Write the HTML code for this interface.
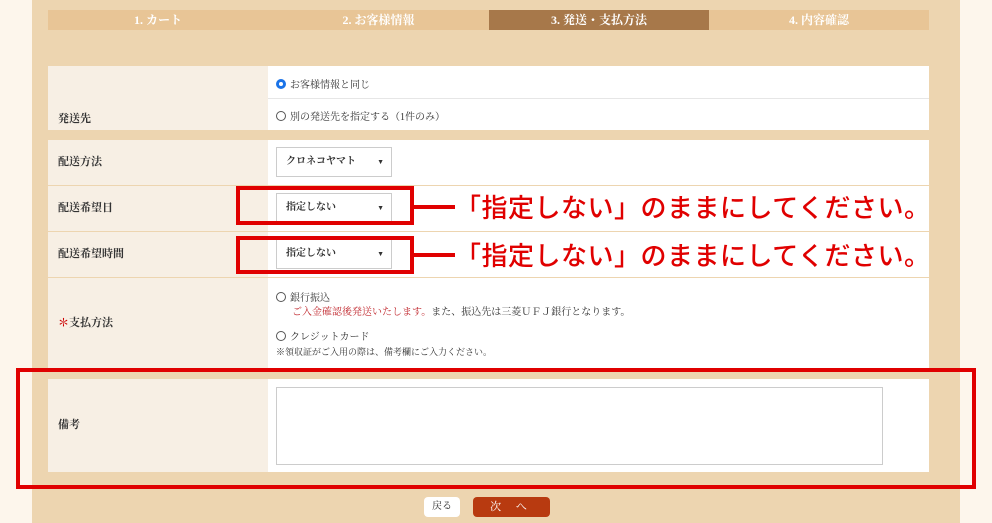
<!DOCTYPE html>
<html><head><meta charset="utf-8"><style>
*{margin:0;padding:0;box-sizing:border-box}
body{width:992px;height:523px;background:#fdf6ec;position:relative;overflow:hidden;font-family:"Liberation Serif","Noto Serif CJK SC",serif;font-size:11px;color:#333}
.main{position:absolute;left:32px;top:0;width:928px;height:523px;background:#edd5b0}
.abs{position:absolute}
.step{position:absolute;top:10px;height:20px;width:220px;background:#e8c596;color:#fff;font-weight:bold;font-size:12px;text-align:center;line-height:20px}
.lab{position:absolute;left:48px;width:220px;background:#f7efe4;font-weight:bold;font-size:11px;padding-left:10px}
.val{position:absolute;left:268px;width:661px;background:#fff}
.sel{position:absolute;left:276px;width:116px;height:30px;border:1px solid #ccc;background:#fff;font-size:10px;font-weight:bold;line-height:28px;padding-left:9px}
.sel:after{content:"▼";position:absolute;right:7px;font-size:7px}
.redbox{position:absolute;border:4px solid #e00000}
.call{position:absolute;left:455px;color:#e00000;font-family:"Liberation Sans","Noto Sans CJK JP",sans-serif;font-size:26px;letter-spacing:0.5px;line-height:32px;white-space:nowrap;font-weight:500}
.line{position:absolute;left:414px;width:41px;height:4px;background:#e00000}
.rad{display:inline-block;width:10px;height:10px;border:1px solid #555;border-radius:50%;vertical-align:-1px;margin-right:4px}
</style></head><body>
<div class="main"></div>
<div class="step" style="left:48px">1. カート</div>
<div class="step" style="left:268px;width:221px">2. お客様情報</div>
<div class="step" style="left:489px;background:#a7784a">3. 発送・支払方法</div>
<div class="step" style="left:709px">4. 内容確認</div>

<div class="lab" style="top:66px;height:64px;padding-top:44px">発送先</div>
<div class="val" style="top:66px;height:64px"></div>
<div class="abs" style="left:268px;top:98px;width:661px;height:1px;background:#e6e6e6"></div>
<div class="abs" style="left:276px;top:76px;font-size:10px"><span class="rad" style="border:3px solid #1a73e8;background:#fff"></span>お客様情報と同じ</div>
<div class="abs" style="left:276px;top:108px;font-size:10px"><span class="rad"></span>別の発送先を指定する（1件のみ）</div>

<div class="lab" style="top:140px;height:45px;line-height:45px">配送方法</div>
<div class="val" style="top:140px;height:45px"></div>
<div class="sel" style="top:147px">クロネコヤマト</div>
<div class="lab" style="top:186px;height:45px;line-height:45px">配送希望日</div>
<div class="val" style="top:186px;height:45px"></div>
<div class="sel" style="top:193px">指定しない</div>
<div class="lab" style="top:232px;height:45px;line-height:45px">配送希望時間</div>
<div class="val" style="top:232px;height:45px"></div>
<div class="sel" style="top:239px">指定しない</div>
<div class="lab" style="top:278px;height:90px;line-height:90px"><span style="color:#c00">＊</span>支払方法</div>
<div class="val" style="top:278px;height:90px"></div>
<div class="abs" style="left:276px;top:292px;font-size:10px;line-height:14px"><span class="rad"></span>銀行振込<br><span style="margin-left:16px;color:#c0272d">ご入金確認後発送いたします。</span>また、振込先は三菱ＵＦＪ銀行となります。</div>
<div class="abs" style="left:276px;top:331px;font-size:10px;line-height:14px"><span class="rad"></span>クレジットカード<br><span style="font-size:9px">※領収証がご入用の際は、備考欄にご入力ください。</span></div>

<div class="lab" style="top:379px;height:93px;line-height:93px">備考</div>
<div class="val" style="top:379px;height:93px"></div>
<div class="abs" style="left:276px;top:387px;width:607px;height:78px;border:1px solid #ccc;background:#fff"></div>

<div class="abs" style="left:424px;top:497px;width:36px;height:20px;background:#fff;border-radius:4px;font-size:10px;text-align:center;line-height:20px">戻る</div>
<div class="abs" style="left:473px;top:497px;width:77px;height:20px;background:#b83a10;border-radius:4px;color:#fff;font-size:11px;text-align:center;line-height:20px;letter-spacing:6px">次 へ</div>

<div class="redbox" style="left:236px;top:186px;width:178px;height:39px"></div>
<div class="redbox" style="left:236px;top:236px;width:178px;height:38px"></div>
<div class="line" style="top:205px"></div>
<div class="line" style="top:253px"></div>
<div class="call" style="top:192px">「指定しない」のままにしてください。</div>
<div class="call" style="top:240px">「指定しない」のままにしてください。</div>
<div class="redbox" style="left:16px;top:368px;width:960px;height:121px"></div>
</body></html>
